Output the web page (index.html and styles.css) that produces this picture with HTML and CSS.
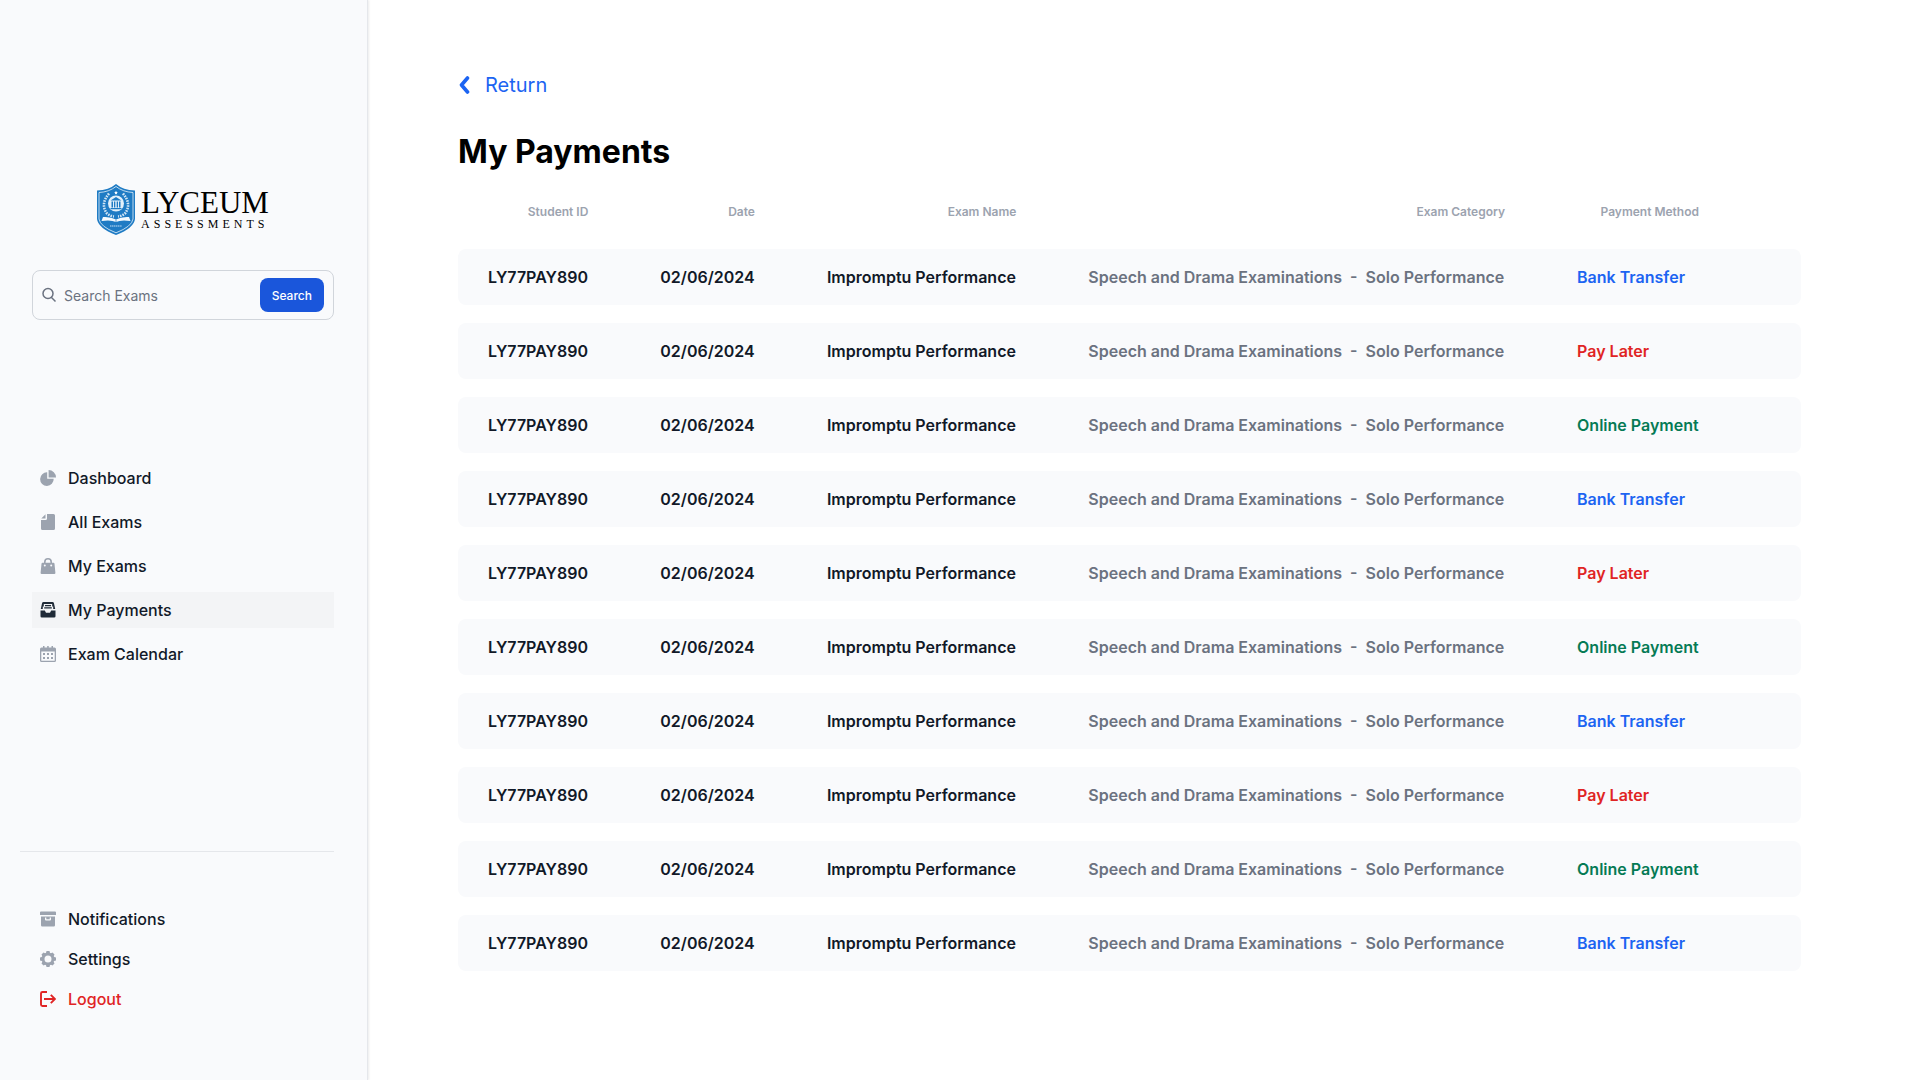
FILE: index.html
```html
<!DOCTYPE html>
<html lang="en">
<head>
    <meta charset="UTF-8">
    <meta name="viewport" content="width=device-width, initial-scale=1.0">
    <title>My Payments - Lyceum Assessments</title>
    <link rel="stylesheet" href="styles.css">
</head>
<body>
    <div class="layout">
        <aside class="sidebar">
            <a href="#" class="logo">
                <svg class="shield" viewBox="0 0 38 51" width="38" height="51" aria-hidden="true">
                    <path d="M19 0 Q26 6 38 6.500 V35 Q37 44 19 51 Q1 44 0 35 V6.500 Q12 6 19 0z" fill="#1f7bc4"/>
                    <path d="M19 2.500 Q26 8 36 8.500 V35 Q35 42.500 19 48.800 Q3 42.500 2 35 V8.500 Q12 8 19 2.500z" fill="none" stroke="#e6f1fa" stroke-width=".8"/>
                    <path d="M19 6.800l.6 1.200 1.300.2-1 .9.200 1.300-1.100-.6-1.100.6.200-1.300-1-.9 1.300-.2z" fill="#fff"/>
                    <path d="M12 9.500Q3 20 10 29.500Q13 32 17 32.500M26 9.500Q35 20 28 29.500Q25 32 21 32.500" fill="none" stroke="#d3e6f5" stroke-width="2.600" stroke-dasharray="1.600 1"/>
                    <circle cx="19" cy="19.500" r="8" fill="#e3f0fa"/>
                    <path d="M13.500 16.500L19 13l5.500 3.500zM14.500 17.500h1.500v6h-1.500zM17 17.500h1.300v6H17zM19.700 17.500H21v6h-1.300zM22 17.500h1.500v6H22zM13.500 24h11v1.200h-11z" fill="#1f7bc4"/>
                    <path d="M6 33Q14 32.500 19 35.500Q24 32.500 32 33L33.500 37Q24 35.500 19 38Q14 35.500 4.500 37z" fill="#f4f9fd"/>
                    <path d="M19 35.500V38" stroke="#1f7bc4" stroke-width=".7"/>
                    <path d="M13 42h12" stroke="#8dbde2" stroke-width="1.600" stroke-dasharray="1.400 .5"/>
                </svg>
                <span class="logo-text">
                    <span class="logo-name">LYCEUM</span>
                    <span class="logo-sub">ASSESSMENTS</span>
                </span>
            </a>

            <form class="search" role="search">
                <svg viewBox="0 0 16 16" width="16" height="16" aria-hidden="true">
                    <path d="M10.500 10.500L14.500 14.500M12 6.500a5 5 0 1 1-10 0 5 5 0 0 1 10 0z" fill="none" stroke="#6b7280" stroke-width="1.500"/>
                </svg>
                <input type="search" placeholder="Search Exams" aria-label="Search Exams">
                <button type="submit">Search</button>
            </form>

            <nav class="menu">
                <a href="#">
                    <svg viewBox="0 0 16 16" aria-hidden="true"><path d="M7.200 2.300v6.500h6.500A6.800 6.800 0 1 1 7.200 2.300zM8.600 0A7.400 7.400 0 0 1 16 7.400H8.600z"/></svg>
                    Dashboard
                </a>
                <a href="#">
                    <svg viewBox="0 0 16 16" aria-hidden="true"><path d="M7 0h6.500A1.500 1.500 0 0 1 15 1.500v13a1.500 1.500 0 0 1-1.500 1.500h-11A1.500 1.500 0 0 1 1 14.500V6h4.500A1.500 1.500 0 0 0 7 4.500zM5.500.3v4.200H1.300z"/></svg>
                    All Exams
                </a>
                <a href="#">
                    <svg viewBox="0 0 16 16" aria-hidden="true"><path fill-rule="evenodd" d="M8 0a4 4 0 0 0-4 4v.8H2.500a1 1 0 0 0-1 .9L.6 14.800A1.100 1.100 0 0 0 1.700 16h12.600a1.100 1.100 0 0 0 1.100-1.200l-.9-9.100a1 1 0 0 0-1-.9H12V4a4 4 0 0 0-4-4zM5.600 4.800V4a2.400 2.400 0 0 1 4.800 0v.8zM4.800 6.500a1 1 0 1 1 0 2 1 1 0 0 1 0-2zM11.200 6.500a1 1 0 1 1 0 2 1 1 0 0 1 0-2z"/></svg>
                    My Exams
                </a>
                <a href="#" class="active" aria-current="page">
                    <svg viewBox="0 0 16 16" aria-hidden="true"><path d="M3.500 0h9a1.500 1.500 0 0 1 1.400 1.100L15.200 7h-2V4.500h-1V2H3.800v2.500h-1V7h-2l1.300-5.900A1.500 1.500 0 0 1 3.500 0zM5 3h6v1.200H5zM4.200 5.300h7.600v1.300H4.200zM.5 8.500h4.300L6 10.800h4l1.200-2.300h4.300v5.700a1.300 1.300 0 0 1-1.300 1.300H1.800A1.300 1.300 0 0 1 .5 14.200z"/></svg>
                    My Payments
                </a>
                <a href="#">
                    <svg viewBox="0 0 16 16" aria-hidden="true"><path fill-rule="evenodd" d="M3 0h1.500v1.500h2.700V0h1.500v1.500h2.800V0H13v1.500h1.500A1.500 1.500 0 0 1 16 3v11.500a1.500 1.500 0 0 1-1.500 1.500h-13A1.500 1.500 0 0 1 0 14.500V3a1.500 1.500 0 0 1 1.500-1.500H3zM1.300 5.500v9.200h13.400V5.500z"/><path d="M3 7h2v2H3zm4 0h2v2H7zm4 0h2v2h-2zM3 11h2v2H3zm4 0h2v2H7zm4 0h2v2h-2z"/></svg>
                    Exam Calendar
                </a>
            </nav>

            <nav class="menu menu-bottom">
                <a href="#">
                    <svg viewBox="0 0 16 16" aria-hidden="true"><path fill-rule="evenodd" d="M1 .5h14a1 1 0 0 1 1 1V4H0V1.500a1 1 0 0 1 1-1zM1 5.500h14v8.800a1.200 1.200 0 0 1-1.200 1.200H2.200A1.200 1.200 0 0 1 1 14.300zM5 6.500v2a1 1 0 0 0 1 1h4a1 1 0 0 0 1-1v-2H9.700v1.700H6.300V6.500z"/></svg>
                    Notifications
                </a>
                <a href="#">
                    <svg viewBox="0 0 16 16" aria-hidden="true"><circle cx="8" cy="8" r="5" fill="none" stroke="currentColor" stroke-width="3"/><path d="M6.500 0h3l.5 2H6zM6.500 16h3l.5-2H6zM0 6.500v3l2 .5V6zM16 6.500v3l-2 .5V6zM1.500 3.500l2-2 2 1-3 3zM12.500 1.500l2 2-1 2-3-3zM1.500 12.500l2 2 2-1-3-3zM14.500 12.500l-2 2-2-1 3-3z"/></svg>
                    Settings
                </a>
                <a href="#" class="logout">
                    <svg viewBox="0 0 16 16" aria-hidden="true"><path d="M7 1H2.500A1.500 1.500 0 0 0 1 2.500v11A1.500 1.500 0 0 0 2.500 15H7M4 8h11M10.800 3.800L15 8l-4.200 4.200" fill="none" stroke="currentColor" stroke-width="1.900"/></svg>
                    Logout
                </a>
            </nav>
        </aside>

        <main class="content">
            <a href="#" class="return">
                <svg viewBox="0 0 12 18" width="12" height="18" aria-hidden="true"><path d="M9.500 2L3.500 9l6 7" fill="none" stroke="currentColor" stroke-width="3.600" stroke-linecap="round" stroke-linejoin="round"/></svg>
                Return
            </a>
            <h1>My Payments</h1>

            <table class="payments">
                <thead>
                    <tr>
                        <th scope="col">Student ID</th>
                        <th scope="col">Date</th>
                        <th scope="col">Exam Name</th>
                        <th scope="col">Exam Category</th>
                        <th scope="col">Payment Method</th>
                    </tr>
                </thead>
                <tbody id="payment-rows"></tbody>
            </table>
        </main>
    </div>

    <script>
        const methods = [
            { name: 'Bank Transfer', className: 'bank' },
            { name: 'Pay Later', className: 'later' },
            { name: 'Online Payment', className: 'online' }
        ];

        const rows = document.getElementById('payment-rows');

        for (let i = 0; i < 10; i++) {
            const method = methods[i % methods.length];
            rows.innerHTML += `
                <tr>
                    <td>LY77PAY890</td>
                    <td>02/06/2024</td>
                    <td>Impromptu Performance</td>
                    <td class="category">Speech and Drama Examinations&nbsp; -&nbsp; Solo Performance</td>
                    <td class="${method.className}">${method.name}</td>
                </tr>`;
        }
    </script>
</body>
</html>
```
FILE: styles.css
```css
* {
    box-sizing: border-box;
}
body {
    font-family: Inter, sans-serif;
    background-color: #fff;
    color: #111928;
    margin: 0;
}
a {
    text-decoration: none;
}
.layout {
    display: flex;
    min-height: 100vh;
}

/* Sidebar */
.sidebar {
    flex: 0 0 368px;
    min-width: 0;
    padding: 184px 33px 60px 32px;
    background-color: #f9fafc;
    border-right: 1px solid #e5e7eb;
    box-shadow: 1px 0 2px rgba(0, 0, 0, 0.08);
}
.logo {
    display: flex;
    justify-content: center;
    gap: 6px;
    color: #000;
    font-family: "Liberation Serif", serif;
}
.logo-text {
    display: flex;
    flex-direction: column;
    padding-top: 4px;
}
.logo-name {
    font-size: 31px;
    line-height: 30px;
}
.logo-sub {
    font-size: 12px;
    line-height: 12px;
    letter-spacing: 4px;
    margin-right: -4px;
}
.search {
    display: flex;
    align-items: center;
    gap: 7px;
    height: 50px;
    margin-top: 35px;
    padding: 0 9px 0 8px;
    border: 1px solid #d1d5db;
    border-radius: 8px;
}
.search svg {
    flex: none;
}
.search input {
    flex: 1;
    width: 100%;
    min-width: 0;
    padding: 0;
    border: none;
    outline: none;
    background: none;
    font: 14px Inter, sans-serif;
}
.search input::placeholder {
    color: #6b7280;
}
.search button {
    height: 34px;
    padding: 0 12px;
    border: none;
    border-radius: 8px;
    background-color: #1a56db;
    color: #fff;
    font: 500 12px Inter, sans-serif;
    cursor: pointer;
}
.menu {
    display: flex;
    flex-direction: column;
    gap: 8px;
    margin-top: 140px;
}
.menu a {
    display: flex;
    align-items: center;
    gap: 12px;
    height: 36px;
    padding: 0 8px;
    color: #111928;
    font-size: 16px;
    font-weight: 500;
}
.menu a:hover,
.menu .active {
    background-color: #f3f4f6;
}
.menu svg {
    width: 16px;
    height: 16px;
    color: #9ca3af;
    fill: currentColor;
}
.menu .active svg {
    color: #1f2a37;
}
.menu-bottom {
    gap: 4px;
    margin: 179px 0 0 -12px;
    padding: 49px 0 0 12px;
    border-top: 1px solid #e5e7eb;
}
.menu .logout,
.menu .logout svg {
    color: #e02424;
}

/* Payments */
.content {
    flex: 1;
    padding: 70px 119px 60px 90px;
}
.return {
    display: inline-flex;
    align-items: center;
    gap: 15px;
    color: #1c64f2;
    font-size: 20px;
    line-height: 30px;
}
h1 {
    margin: 32px 0 0;
    color: #000;
    font-size: 32px;
    line-height: 40px;
}
.payments {
    width: 100%;
    margin-top: 13px;
    border-spacing: 0 18px;
}
.payments th,
.payments td {
    padding: 0 72px 0 0;
    white-space: nowrap;
}
.payments th {
    padding-bottom: 10px;
    color: #9ca3af;
    font-size: 12px;
    font-weight: 600;
    line-height: 18px;
    text-align: right;
}
.payments td {
    height: 56px;
    background-color: #f9fafc;
    font-size: 16px;
    font-weight: 600;
}
.payments th:first-child,
.payments td:first-child {
    padding-left: 30px;
    border-radius: 8px 0 0 8px;
}
.payments th:last-child,
.payments td:last-child {
    padding-right: 102px;
    border-radius: 0 8px 8px 0;
}
.payments .category {
    color: #6b7280;
}
.payments .bank {
    color: #1c64f2;
}
.payments .later {
    color: #e02424;
}
.payments .online {
    color: #057a55;
}
```
